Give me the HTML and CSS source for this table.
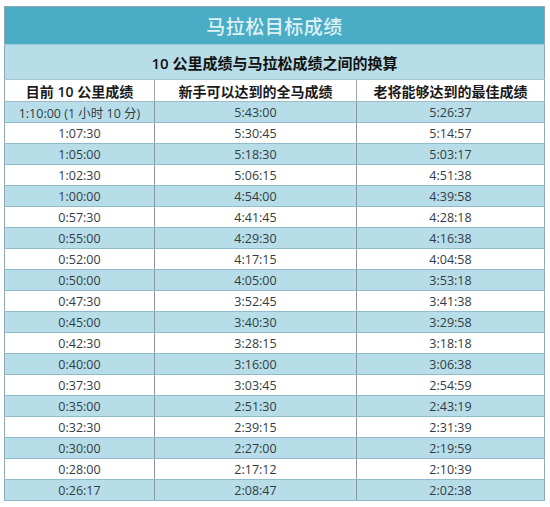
FILE: index.html
```html
<!DOCTYPE html>
<html lang="zh">
<head>
<meta charset="utf-8">
<title>马拉松目标成绩</title>
<link rel="stylesheet" href="styles.css">
</head>
<body>
<div class="wrap">
<table class="grid">
<colgroup><col class="c1"><col class="c2"><col class="c3"></colgroup>
<thead>
<tr class="title"><th colspan="3">马拉松目标成绩</th></tr>
<tr class="sub"><th colspan="3">10 公里成绩与马拉松成绩之间的换算</th></tr>
<tr class="head"><th>目前 10 公里成绩</th><th>新手可以达到的全马成绩</th><th>老将能够达到的最佳成绩</th></tr>
</thead>
<tbody>
<tr><td>1:10:00 (1 小时 10 分)</td><td>5:43:00</td><td>5:26:37</td></tr>
<tr><td>1:07:30</td><td>5:30:45</td><td>5:14:57</td></tr>
<tr><td>1:05:00</td><td>5:18:30</td><td>5:03:17</td></tr>
<tr><td>1:02:30</td><td>5:06:15</td><td>4:51:38</td></tr>
<tr><td>1:00:00</td><td>4:54:00</td><td>4:39:58</td></tr>
<tr><td>0:57:30</td><td>4:41:45</td><td>4:28:18</td></tr>
<tr><td>0:55:00</td><td>4:29:30</td><td>4:16:38</td></tr>
<tr><td>0:52:00</td><td>4:17:15</td><td>4:04:58</td></tr>
<tr><td>0:50:00</td><td>4:05:00</td><td>3:53:18</td></tr>
<tr><td>0:47:30</td><td>3:52:45</td><td>3:41:38</td></tr>
<tr><td>0:45:00</td><td>3:40:30</td><td>3:29:58</td></tr>
<tr><td>0:42:30</td><td>3:28:15</td><td>3:18:18</td></tr>
<tr><td>0:40:00</td><td>3:16:00</td><td>3:06:38</td></tr>
<tr><td>0:37:30</td><td>3:03:45</td><td>2:54:59</td></tr>
<tr><td>0:35:00</td><td>2:51:30</td><td>2:43:19</td></tr>
<tr><td>0:32:30</td><td>2:39:15</td><td>2:31:39</td></tr>
<tr><td>0:30:00</td><td>2:27:00</td><td>2:19:59</td></tr>
<tr><td>0:28:00</td><td>2:17:12</td><td>2:10:39</td></tr>
<tr><td>0:26:17</td><td>2:08:47</td><td>2:02:38</td></tr>
</tbody>
</table>
</div>
</body>
</html>
```
FILE: styles.css
```css
html, body {
  margin: 0;
  padding: 0;
  background: #ffffff;
}
.wrap {
  padding: 6px 0 0 4px;
}
.grid {
  border-collapse: collapse;
  table-layout: fixed;
  width: 540px;
  font-family: "Open Sans", "Noto Sans CJK SC", sans-serif;
  border: 1px solid #8da9b3;
}
.c1 { width: 150px; }
.c2 { width: 202px; }
.c3 { width: 188px; }
.grid th, .grid td {
  padding: 0;
  text-align: center;
  white-space: nowrap;
  overflow: hidden;
}
.title th {
  height: 37px;
  background: #4bacc6;
  color: #def2f6;
  font-size: 19px;
  font-weight: 500;
  letter-spacing: 0.5px;
}
.sub th {
  height: 34px;
  background: #b7dee8;
  color: #111;
  font-size: 15px;
  font-weight: 600;
  border-top: 1px solid #9cc9d6;
  border-bottom: 1px solid #a8c4cc;
}
.head th {
  height: 21px;
  background: #ffffff;
  color: #1a1a1a;
  font-size: 14px;
  font-weight: 600;
  border-right: 1px solid #9aa9ae;
  border-bottom: 1px solid #9fbcc6;
}
.grid td {
  height: 20px;
  font-size: 12.5px;
  color: #333c44;
  border-right: 1px solid #8a9aa0;
  border-bottom: 1px solid #8fbccb;
}
.head th:last-child, .grid td:last-child {
  border-right: none;
}
tbody tr:nth-child(odd) td {
  background: #b7dee8;
}
tbody tr:nth-child(even) td {
  background: #ffffff;
}
```
